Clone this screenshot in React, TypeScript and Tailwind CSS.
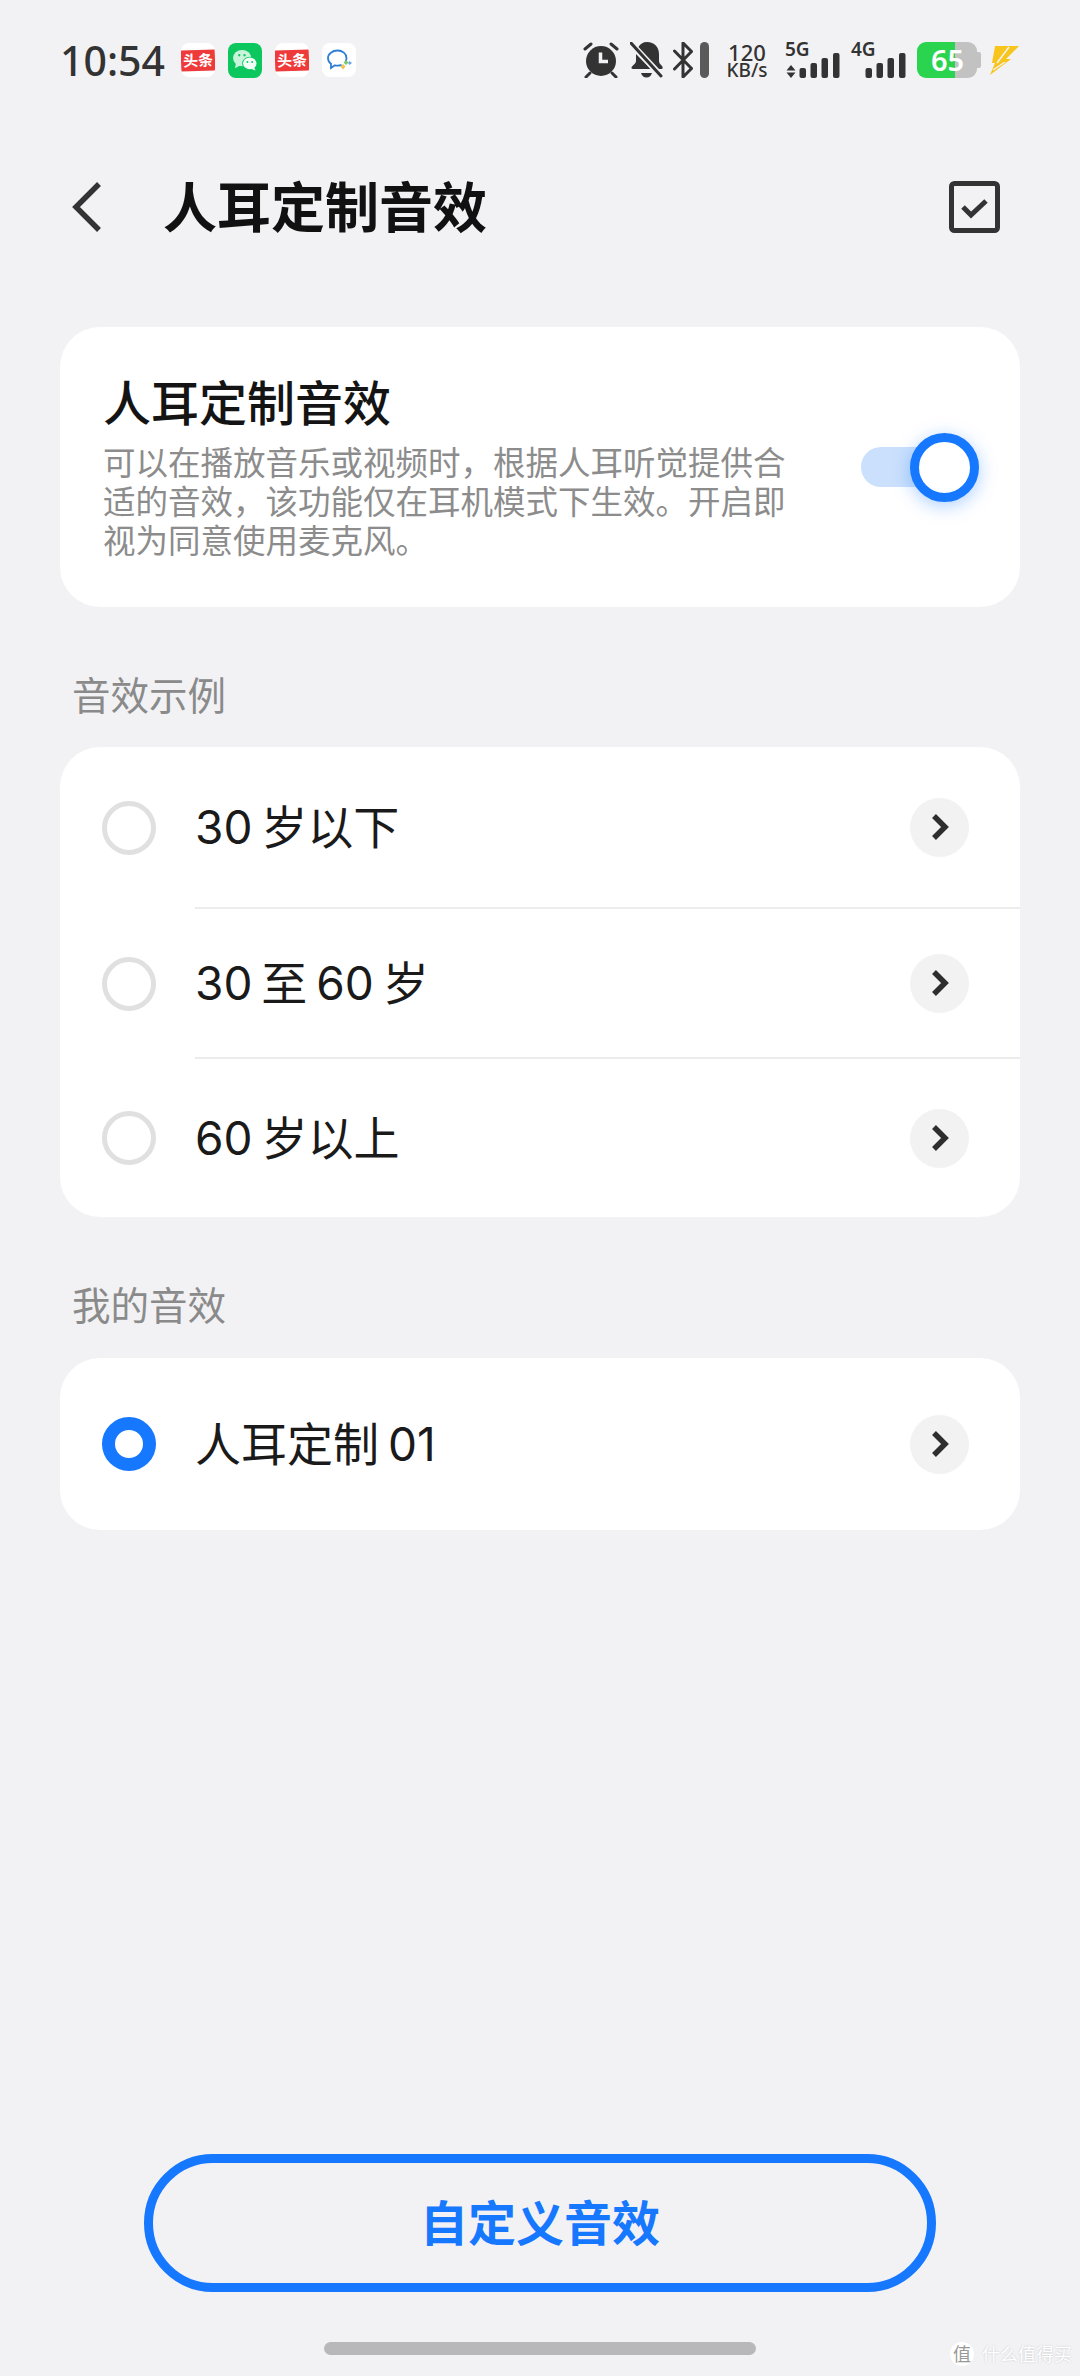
import { ReactNode } from "react";

const font = { fontFamily: '"Noto Sans", "Noto Sans CJK SC", sans-serif' };
const rowFont = { fontFamily: 'Inter, "Noto Sans CJK SC", sans-serif' };

function Toutiao() {
  return (
    <div className="w-[34px] h-[34px] bg-white rounded-[8px] flex items-center overflow-hidden">
      <div className="w-[34px] h-[21px] bg-[#ee3a3a] -rotate-2 flex items-center justify-center text-white text-[15px] leading-none font-bold">
        头条
      </div>
    </div>
  );
}

function Wechat() {
  return (
    <div className="w-[34px] h-[35px] bg-[#0bc75e] rounded-[8px] flex items-center justify-center">
      <svg width="26" height="23" viewBox="0 0 27 24">
        <ellipse cx="10.500" cy="9.500" rx="9.500" ry="8.500" fill="#c9f3da" />
        <path d="M4 15l-1 5 6-3z" fill="#c9f3da" />
        <ellipse cx="18.500" cy="15" rx="8" ry="7" fill="#0bc75e" />
        <ellipse cx="18.500" cy="15" rx="7" ry="6.200" fill="#f2fff7" />
        <path d="M23 19l1.500 3.500-5-2z" fill="#f2fff7" />
        <circle cx="7.500" cy="6.500" r="1.200" fill="#0bc75e" />
        <circle cx="13" cy="6.500" r="1.200" fill="#0bc75e" />
        <circle cx="16" cy="13.500" r="1" fill="#0bc75e" />
        <circle cx="21" cy="13.500" r="1" fill="#0bc75e" />
      </svg>
    </div>
  );
}

function ChatApp() {
  return (
    <div className="w-[34px] h-[34px] bg-white rounded-[8px] flex items-center justify-center">
      <svg width="27" height="23" viewBox="0 0 27 23" fill="none">
        <path
          d="M11.500 1.500c5 0 9 3.300 9 7.500 0 1-.2 1.800-.6 2.600M15 16.200c-1 .3-2.300.5-3.500.5-1 0-1.800-.1-2.700-.4L5 19v-4.200C3 13.400 2 11.300 2 9c0-4.200 4.500-7.500 9.500-7.500"
          stroke="#2d7fd3"
          strokeWidth="1.800"
          strokeLinecap="round"
        />
        <path d="M20 11l2.500 2.500-2.500 2.500-2.500-2.500z" fill="#7fc66a" />
        <path d="M17 15l2.500 2.500-2.500 3-2.500-3z" fill="#f2c14e" />
        <path d="M23.500 12l2.500 2-2.500 2-1.500-2z" fill="#6aa9e8" />
      </svg>
    </div>
  );
}

function Alarm() {
  return (
    <svg width="36" height="36" viewBox="0 0 36 36" fill="none">
      <circle cx="18" cy="19" r="15" fill="#333" />
      <path d="M17.500 10.500v9h7.500" stroke="#f2f2f5" strokeWidth="3.500" />
      <path d="M2 7l6-5M34 7l-6-5M3 35l4-4M33 35l-4-4" stroke="#333" strokeWidth="3" strokeLinecap="round" />
    </svg>
  );
}

function BellOff() {
  return (
    <svg width="33" height="36" viewBox="0 0 33 36" fill="none">
      <path
        d="M17 0c-4 0-7 2-8.500 5L29 27h2.500c1.500 0 1.500-2 .5-3-1.500-1.500-3-3-3-5v-7C29 5 24.500 0 17 0zM6 12v7c0 2-2 3.500-4 5.500-1 1-.5 2.500 1 2.500h18z"
        fill="#333"
      />
      <path d="M11 31h11c-1 3-3 4.500-5.500 4.500S12 34 11 31z" fill="#333" />
      <path d="M1 2l30 33" stroke="#f2f2f5" strokeWidth="5" />
      <path d="M1 1l30 33" stroke="#333" strokeWidth="3" strokeLinecap="round" />
    </svg>
  );
}

function Bluetooth() {
  return (
    <svg width="20" height="36" viewBox="0 0 20 36" fill="none">
      <path d="M1.500 9l17 17.500L10 35V1l8.500 8.500L1.500 27" stroke="#333" strokeWidth="3" strokeLinejoin="round" strokeLinecap="round" />
    </svg>
  );
}

function Signal({ label, arrows }: { label: string; arrows?: boolean }) {
  return (
    <div className="relative w-[55px] h-[36px]">
      <span className="absolute left-0 top-[-3px] text-[#333] text-[19px] leading-[20px] font-semibold">{label}</span>
      <svg className="absolute left-0 top-0" width="55" height="36" viewBox="0 0 55 36" fill="#333">
        {arrows && <path d="M6 23l4.500 5.500h-9zM6 36l-4.500-5.500h9z" />}
        <rect x="14.500" y="26" width="6.500" height="10" rx="2" />
        <rect x="25.500" y="21" width="6.500" height="15" rx="2" />
        <rect x="36.500" y="16" width="6.500" height="20" rx="2" />
        <rect x="48" y="11" width="6.500" height="25" rx="2" />
      </svg>
    </div>
  );
}

function Battery() {
  return (
    <div className="relative w-[64px] h-[36px] flex items-center">
      <div className="w-[38px] h-full bg-[#2bd44e] rounded-l-[9px]" />
      <div className="w-[22px] h-full bg-[#c2c2c2] rounded-r-[9px]" />
      <div className="w-[4px] h-[16px] bg-[#c2c2c2] rounded-r-[2px]" />
      <span className="absolute left-[14px] top-0 text-white text-[29px] leading-[36px] font-semibold">65</span>
    </div>
  );
}

function Bolt() {
  return (
    <svg width="29" height="30" viewBox="0 0 29 30">
      <path d="M5 1h24L16 14h5L0 30l5-12H2z" fill="#f8c51c" />
      <path d="M7 18L19 2M3 25l12-8" stroke="#f2f2f5" strokeWidth="1.500" fill="none" />
    </svg>
  );
}

function StatusBar() {
  return (
    <div className="h-[120px] pt-[42px] pl-[60px] pr-[61px] flex items-start">
      <span className="w-[104px] text-[41px] leading-[36px] font-medium text-[#333] whitespace-nowrap">10:54</span>
      <div className="ml-[17px] h-[36px] flex items-center gap-[13px]">
        <Toutiao />
        <Wechat />
        <Toutiao />
        <ChatApp />
      </div>
      <div className="ml-auto h-[36px] flex items-center">
        <Alarm />
        <div className="ml-[11px]"><BellOff /></div>
        <div className="ml-[10px]"><Bluetooth /></div>
        <div className="ml-[7px] w-[9px] h-[36px] rounded-full bg-[#5a5a5a]" />
        <div className="ml-[17px] w-[42px] flex flex-col items-center text-[#333] font-medium whitespace-nowrap">
          <span className="text-[22px] leading-[20px]">120</span>
          <span className="text-[19px] leading-[16px]">KB/s</span>
        </div>
        <div className="ml-[17px]"><Signal label="5G" arrows /></div>
        <div className="ml-[11px]"><Signal label="4G" /></div>
        <div className="ml-[11px]"><Battery /></div>
        <div className="ml-[9px]"><Bolt /></div>
      </div>
    </div>
  );
}

function Header() {
  return (
    <div className="h-[174px] mb-[33px] pl-[72px] pr-[80px] flex items-center">
      <svg width="30" height="52" viewBox="0 0 30 52" fill="none">
        <path d="M27 3L4 26l23 23" stroke="#333" strokeWidth="5.500" />
      </svg>
      <h1 className="ml-[61px] text-[54px] leading-none font-semibold text-[#111]">人耳定制音效</h1>
      <svg className="ml-auto" width="51" height="52" viewBox="0 0 51 52" fill="none">
        <rect x="2.500" y="2.500" width="46" height="47" rx="3" stroke="#333" strokeWidth="5" />
        <path d="M14 26l8 8 15-14" stroke="#333" strokeWidth="5" />
      </svg>
    </div>
  );
}

function Card({ children }: { children: ReactNode }) {
  return <div className="mx-[60px] bg-white rounded-[40px] overflow-hidden">{children}</div>;
}

function Label({ children, className }: { children: ReactNode; className: string }) {
  return <div className={"mt-[65px] ml-[72px] text-[38.500px] leading-[46px] text-[#8a8a8a] " + className}>{children}</div>;
}

function Row({ text, height, divider, selected }: { text: string; height: string; divider?: boolean; selected?: boolean }) {
  return (
    <div className={"flex items-center pl-[42px] " + height}>
      {selected ? (
        <div className="w-[54px] h-[54px] shrink-0 rounded-full border-[13px] border-[#1677ff]" />
      ) : (
        <div className="w-[54px] h-[54px] shrink-0 rounded-full border-[5px] border-[#e0e0e0]" />
      )}
      <div className={"ml-[39px] flex-1 h-full pr-[51px] flex items-center justify-between " + (divider ? "border-b-2 border-[#ececec]" : "")}>
        <span className="text-[46px] leading-none text-[#1a1a1a] [word-spacing:-4px]" style={rowFont}>{text}</span>
        <div className="w-[59px] h-[59px] rounded-full bg-[#f2f2f2] flex items-center justify-center">
          <svg width="20" height="30" viewBox="0 0 20 30" fill="none">
            <path d="M4 4l11 11L4 26" stroke="#2e2e2e" strokeWidth="5.500" />
          </svg>
        </div>
      </div>
    </div>
  );
}

export default function App() {
  return (
    <div className="relative w-[1080px] h-[2376px] bg-[#f2f2f5] flex flex-col overflow-hidden" style={font}>
      <StatusBar />
      <Header />

      <Card>
        <div className="h-[280px] pl-[43px] pr-[41px] flex items-center justify-between">
          <div className="w-[690px] h-full pt-[48px]">
            <div className="text-[48px] leading-[56px] font-medium text-[#141414]">人耳定制音效</div>
            <p className="mt-[12px] text-[32.500px] leading-[39px] text-[#8c8c8c]">
              可以在播放音乐或视频时，根据人耳听觉提供合适的音效，该功能仅在耳机模式下生效。开启即视为同意使用麦克风。
            </p>
          </div>
          <div className="relative w-[118px] h-[69px] flex items-center">
            <div className="w-[80px] h-[40px] rounded-full bg-[#cbe0fc]" />
            <div className="absolute right-0 top-0 w-[69px] h-[69px] rounded-full bg-white border-[9px] border-[#1677ff] shadow-[0_4px_18px_rgba(22,119,255,0.35)]" />
          </div>
        </div>
      </Card>

      <Label className="mb-[29px]">音效示例</Label>
      <Card>
        <Row text="30 岁以下" height="h-[162px]" divider />
        <Row text="30 至 60 岁" height="h-[150px]" divider />
        <Row text="60 岁以上" height="h-[158px]" />
      </Card>

      <Label className="mb-[30px]">我的音效</Label>
      <Card>
        <Row text="人耳定制 01" height="h-[172px]" selected />
      </Card>

      <div className="mt-auto flex flex-col items-center pb-[21px]">
        <button className="w-[792px] h-[138px] rounded-full border-[9px] border-[#1677ff] text-[48px] font-bold text-[#1677ff]">
          自定义音效
        </button>
        <div className="mt-[50px] w-[432px] h-[13px] rounded-full bg-[#b8b8ba]" />
      </div>

      {/* watermark over the corner */}
      <div className="absolute left-[950px] top-[2342px] flex items-center gap-[8px] text-white">
        <div className="w-[24px] h-[24px] rounded-full bg-white text-[#999] text-[18px] leading-[24px] text-center">值</div>
        <span className="text-[18px] leading-[24px] whitespace-nowrap [text-shadow:0_0_2px_rgba(0,0,0,0.2)]">什么值得买</span>
      </div>
    </div>
  );
}
